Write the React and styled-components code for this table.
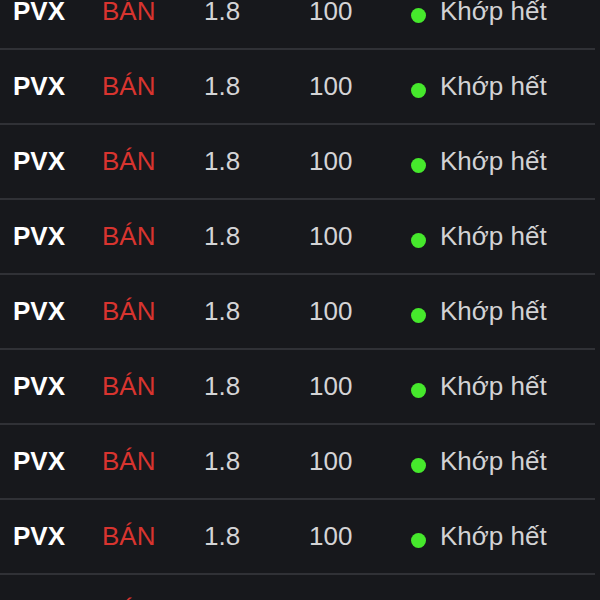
import React from "react";
import styled, { createGlobalStyle } from "styled-components";

const GlobalStyle = createGlobalStyle`
  html, body {
    margin: 0;
    padding: 0;
    background: #17181c;
    overflow: hidden;
  }
  body {
    font-family: "Liberation Sans", Arial, sans-serif;
  }
`;

const Page = styled.div`
  width: 600px;
  height: 600px;
  overflow: hidden;
  background: #17181c;
`;

const List = styled.div`
  margin-top: -25px;
  display: flex;
  flex-direction: column;
`;

const Row = styled.div`
  height: 73px;
  width: 582px;
  padding-left: 13px;
  box-sizing: content-box;
  display: grid;
  grid-template-columns: 89px 102px 105px 102px 1fr;
  align-items: center;
  border-bottom: 2px solid #303136;
  font-size: 26px;
  white-space: nowrap;
`;

const Symbol = styled.span`
  color: #ffffff;
  font-weight: 700;
`;

const Side = styled.span`
  color: ${({ $buy }) => ($buy ? "#2fc24a" : "#d8342f")};
`;

const Num = styled.span`
  color: #d4d4d6;
`;

const Status = styled.div`
  display: flex;
  align-items: center;
  gap: 14px;
  color: #d2d2d4;
`;

const Dot = styled.span`
  width: 15px;
  height: 15px;
  border-radius: 50%;
  background: #46e82c;
  margin-top: 8px;
  flex-shrink: 0;
`;

const orders = Array.from({ length: 9 }, () => ({
  symbol: "PVX",
  side: "BÁN",
  price: "1.8",
  qty: "100",
  status: "Khớp hết",
}));

export default function App() {
  return (
    <Page>
      <GlobalStyle />
      <List>
        {orders.map((o, i) => (
          <Row key={i}>
            <Symbol>{o.symbol}</Symbol>
            <Side>{o.side}</Side>
            <Num>{o.price}</Num>
            <Num>{o.qty}</Num>
            <Status>
              <Dot />
              {o.status}
            </Status>
          </Row>
        ))}
      </List>
    </Page>
  );
}
